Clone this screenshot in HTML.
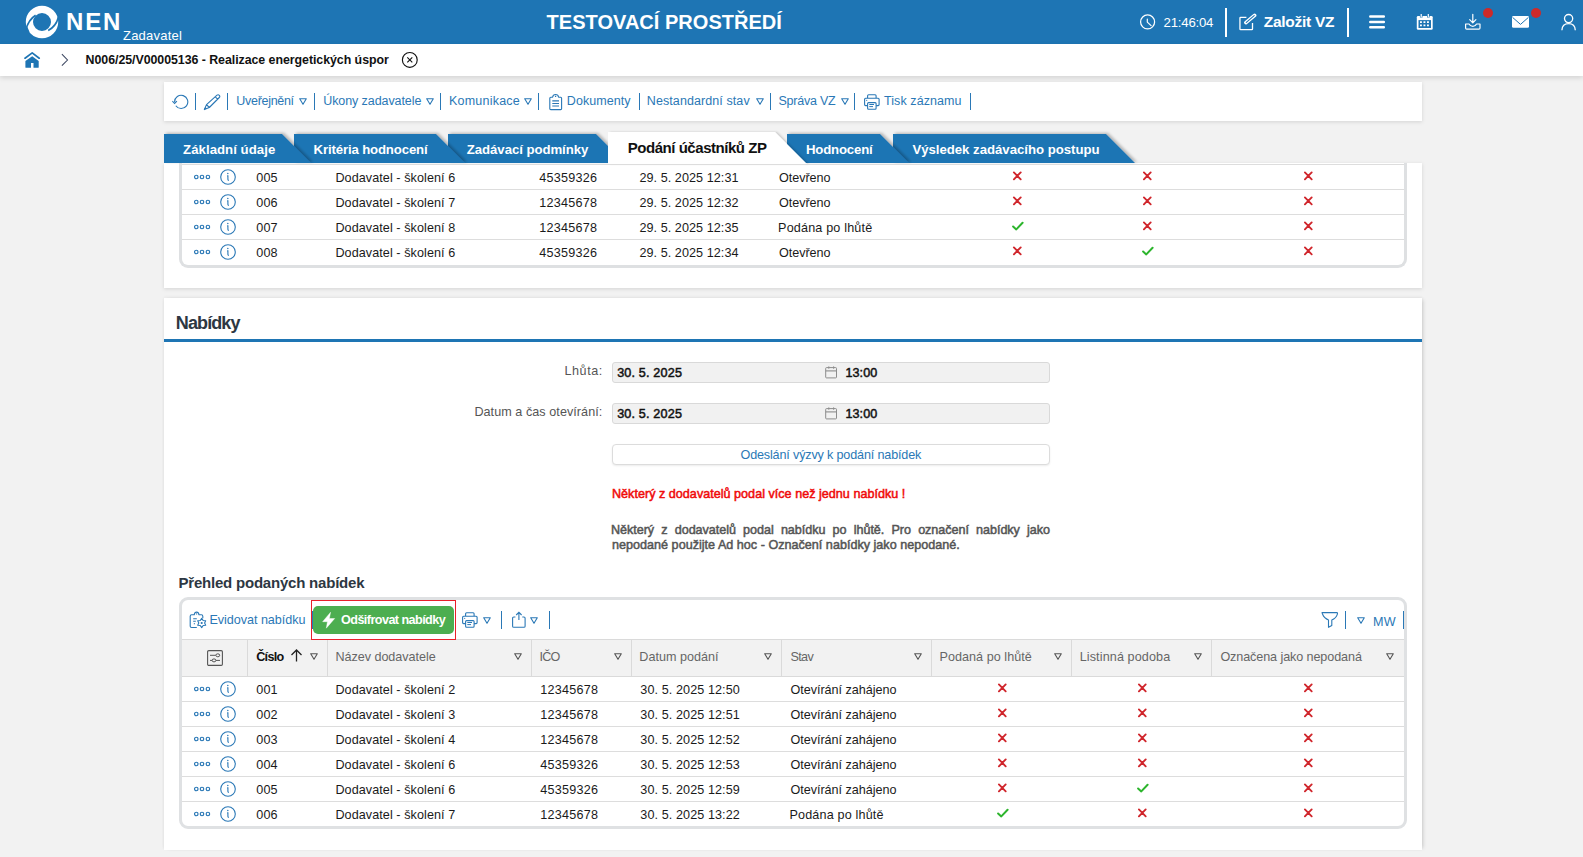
<!DOCTYPE html>
<html><head><meta charset="utf-8">
<style>
*{box-sizing:border-box}
html,body{margin:0;padding:0}
body{width:1583px;height:857px;overflow:hidden;background:#f2f2f2;font-family:"Liberation Sans",sans-serif;position:relative;color:#1a1a1a}
.a{position:absolute}
.t{position:absolute;white-space:nowrap;line-height:1}
.panel{position:absolute;background:#fff;box-shadow:0 1px 4px rgba(0,0,0,.13)}
</style></head>
<body>
<div class="a" style="left:0;top:0;width:1583px;height:44px;background:#1e75b4"></div>
<svg class="a" style="left:25px;top:5px" width="34" height="34" viewBox="0 0 34 34">
  <circle cx="17" cy="17" r="12.6" fill="none" stroke="#fff" stroke-width="7.2"/>
  <path d="M0.5 25.5 Q3.5 14.5 10.6 10.2" fill="none" stroke="#1e75b4" stroke-width="1.7"/>
  <path d="M1 27.5 L2.2 21.5 L4.5 27 Z" fill="#1e75b4"/>
  <path d="M33.6 11.8 Q31 21.5 23.2 25.6" fill="none" stroke="#1e75b4" stroke-width="1.7"/>
 </svg>
<div class="t" style="left:66.00px;top:10.00px;font-size:24px;font-weight:bold;color:#fff;letter-spacing:1.830px;">NEN</div>
<div class="t" style="left:123.00px;top:29.00px;font-size:13px;color:#fff;letter-spacing:0.225px;">Zadavatel</div>
<div class="t" style="left:546.60px;top:12.00px;font-size:20px;font-weight:bold;color:#fff;letter-spacing:0.023px;">TESTOVACÍ PROSTŘEDÍ</div>
<svg class="a" style="left:1139px;top:13px" width="18" height="18" viewBox="0 0 18 18"><circle cx="8.6" cy="8.9" r="7" fill="none" stroke="#fff" stroke-width="1.25"/><path d="M8.3 6V9.1L12.1 12.6" fill="none" stroke="#fff" stroke-width="1.2" stroke-linecap="round" stroke-linejoin="round"/></svg>
<div class="t" style="left:1163.60px;top:16.00px;font-size:13.2px;color:#fff;letter-spacing:-0.214px;">21:46:04</div>
<div class="a" style="left:1225px;top:8px;width:2px;height:29px;background:#fff"></div>
<svg class="a" style="left:1239px;top:13px" width="18" height="18" viewBox="0 0 18 18"><path d="M7.4 4.3H1.6Q0.95 4.3 0.95 4.9V16.1Q0.95 16.7 1.6 16.7H12.9Q13.5 16.7 13.5 16.1V10" fill="none" stroke="#fff" stroke-width="1.3"/><path d="M6.9 9.6L15.6 2.4" stroke="#fff" stroke-width="3.6" stroke-linecap="round"/><path d="M7.3 9.3L15.2 2.7" stroke="#1e75b4" stroke-width="1.1" stroke-linecap="round"/></svg>
<div class="t" style="left:1263.70px;top:14.00px;font-size:15.5px;font-weight:bold;color:#fff;letter-spacing:-0.270px;">Založit VZ</div>
<div class="a" style="left:1347px;top:8px;width:2px;height:29px;background:#fff"></div>
<svg class="a" style="left:1368px;top:14px" width="18" height="16" viewBox="0 0 18 16"><path d="M2.3 2.6H15.8M2.3 7.9H15.8M2.3 13.2H15.8" stroke="#fff" stroke-width="2.5" stroke-linecap="round"/></svg>
<svg class="a" style="left:1416px;top:13px" width="18" height="18" viewBox="0 0 18 18"><rect x="0.8" y="2.9" width="15.9" height="13.8" rx="1.3" fill="#fff"/><rect x="2.5" y="7.1" width="12.5" height="7.9" fill="#1e75b4"/><path d="M4 9.2H13.4M4 12.4H13.4" stroke="#fff" stroke-width="1.7" stroke-dasharray="1.9 1.6"/><path d="M5.2 0.6V4.6M12.3 0.6V4.6" stroke="#1e75b4" stroke-width="2.6"/><path d="M5.2 1V4.2M12.3 1V4.2" stroke="#fff" stroke-width="1.2"/></svg>
<svg class="a" style="left:1464px;top:13px" width="18" height="18" viewBox="0 0 18 18"><path d="M8.8 1.3V9.6M5.7 6.7L8.8 9.8L11.9 6.7" fill="none" stroke="#fff" stroke-width="1.2" stroke-linecap="round" stroke-linejoin="round"/><path d="M1.6 11V15Q1.6 16.1 2.7 16.1H14.9Q16 16.1 16 15V11H12.6Q11.2 13.4 8.8 13.4Q6.4 13.4 5 11Z" fill="none" stroke="#fff" stroke-width="1.2" stroke-linejoin="round"/></svg>
<div class="a" style="left:1483px;top:8px;width:10px;height:10px;border-radius:50%;background:#cd2a2a"></div>
<svg class="a" style="left:1512px;top:16px" width="17" height="12" viewBox="0 0 17 12"><rect x="0" y="0" width="17" height="11.8" rx="1.4" fill="#fff"/><path d="M0.6 1.4L8.5 8.4L16.4 1.4" fill="none" stroke="#1e75b4" stroke-width="1"/></svg>
<div class="a" style="left:1531px;top:8px;width:10px;height:10px;border-radius:50%;background:#cd2a2a"></div>
<svg class="a" style="left:1560px;top:13px" width="17" height="18" viewBox="0 0 17 18"><circle cx="8.6" cy="5.6" r="4.1" fill="none" stroke="#fff" stroke-width="1.3"/><path d="M1.9 17.2Q2.2 10.6 8.6 10.6Q15 10.6 15.3 17.2" fill="none" stroke="#fff" stroke-width="1.3"/></svg>
<div class="a" style="left:0;top:44px;width:1583px;height:32px;background:#fff;box-shadow:0 2px 5px rgba(0,0,0,.13)"></div>
<svg class="a" style="left:24px;top:52px" width="17" height="17" viewBox="0 0 17 17"><path d="M1 6.2L8.2 0.9L15.2 6.2" fill="none" stroke="#1e75b4" stroke-width="1.7" stroke-linecap="round" stroke-linejoin="round"/><path d="M1.4 9.1L8.2 4.2L14.7 9.1V15.2Q14.7 15.8 14 15.8H9.5V10.9H7V15.8H2.1Q1.4 15.8 1.4 15.2Z" fill="#1e75b4"/></svg>
<svg class="a" style="left:60px;top:53px" width="9" height="14" viewBox="0 0 9 14"><path d="M1.9 1.2L7.5 7L1.9 12.7" fill="none" stroke="#3b4660" stroke-width="1.05"/></svg>
<div class="t" style="left:85.60px;top:54.00px;font-size:12.4px;font-weight:bold;color:#111;letter-spacing:-0.054px;">N006/25/V00005136 - Realizace energetických úspor</div>
<svg class="a" style="left:401px;top:51px" width="18" height="18" viewBox="0 0 18 18"><circle cx="8.8" cy="8.9" r="7.4" fill="none" stroke="#111" stroke-width="1.15"/><path d="M6.3 6.4L11.3 11.4M11.3 6.4L6.3 11.4" stroke="#111" stroke-width="1.1"/></svg>
<div class="panel" style="left:164px;top:82px;width:1258px;height:39px"></div>
<svg class="a" style="left:172px;top:94px" width="17" height="16" viewBox="0 0 17 16"><path d="M2.6 7.9A6.6 6.6 0 1 1 3.8 11.7" fill="none" stroke="#2a78b6" stroke-width="1.1"/><path d="M0.3 7.1L2.6 9.4L4.9 7.1" fill="none" stroke="#2a78b6" stroke-width="1.1"/></svg>
<div class="a" style="left:195px;top:93px;width:1px;height:17px;background:#2a78b6"></div>
<svg class="a" style="left:203px;top:93px" width="18" height="18" viewBox="0 0 18 18"><path d="M14 2.2Q15.2 1.2 16.3 2.3Q17.3 3.4 16.3 4.5L6.3 14.5L1.3 16.6L3.5 11.6Z M12.3 3.9L14.6 6.2 M3.5 11.6L6.3 14.5" fill="none" stroke="#2a78b6" stroke-width="1.1" stroke-linejoin="round"/><path d="M1.3 16.6L2.2 13.8L4.1 15.7Z" fill="#2a78b6"/></svg>
<div class="a" style="left:227px;top:93px;width:1px;height:17px;background:#2a78b6"></div>
<div class="t" style="left:236.30px;top:95.00px;font-size:12.5px;color:#2a78b6;letter-spacing:-0.297px;">Uveřejnění</div>
<svg class="a" style="left:299px;top:98px" width="8" height="7" viewBox="0 0 8 7"><path d="M0.7 0.8H7.3L4 6.3Z" fill="none" stroke="#2a78b6" stroke-width="1.1" stroke-linejoin="round"/></svg>
<div class="a" style="left:314px;top:93px;width:1px;height:17px;background:#2a78b6"></div>
<div class="t" style="left:323.20px;top:95.00px;font-size:12.5px;color:#2a78b6;letter-spacing:-0.081px;">Úkony zadavatele</div>
<svg class="a" style="left:425.5px;top:98px" width="8" height="7" viewBox="0 0 8 7"><path d="M0.7 0.8H7.3L4 6.3Z" fill="none" stroke="#2a78b6" stroke-width="1.1" stroke-linejoin="round"/></svg>
<div class="a" style="left:440px;top:93px;width:1px;height:17px;background:#2a78b6"></div>
<div class="t" style="left:449.00px;top:95.00px;font-size:12.5px;color:#2a78b6;letter-spacing:0.218px;">Komunikace</div>
<svg class="a" style="left:524px;top:98px" width="8" height="7" viewBox="0 0 8 7"><path d="M0.7 0.8H7.3L4 6.3Z" fill="none" stroke="#2a78b6" stroke-width="1.1" stroke-linejoin="round"/></svg>
<div class="a" style="left:538px;top:93px;width:1px;height:17px;background:#2a78b6"></div>
<svg class="a" style="left:548px;top:93px" width="15" height="18" viewBox="0 0 15 18"><path d="M4.6 4.2H2.8Q1.8 4.2 1.8 5.2V15.7Q1.8 16.6 2.8 16.6H12.7Q13.6 16.6 13.6 15.7V5.2Q13.6 4.2 12.7 4.2H10.6Q10.2 1.6 7.6 1.5Q5 1.6 4.6 4.2Z" fill="none" stroke="#2a78b6" stroke-width="1.1" stroke-linejoin="round"/><circle cx="7.6" cy="3.4" r="0.7" fill="#2a78b6"/><path d="M4.3 7.9H11M4.3 10.5H11M4.3 13H11" stroke="#2a78b6" stroke-width="1.1"/></svg>
<div class="t" style="left:566.80px;top:95.00px;font-size:12.5px;color:#2a78b6;letter-spacing:0.054px;">Dokumenty</div>
<div class="a" style="left:639px;top:93px;width:1px;height:17px;background:#2a78b6"></div>
<div class="t" style="left:646.80px;top:95.00px;font-size:12.5px;color:#2a78b6;letter-spacing:0.088px;">Nestandardní stav</div>
<svg class="a" style="left:755.5px;top:98px" width="8" height="7" viewBox="0 0 8 7"><path d="M0.7 0.8H7.3L4 6.3Z" fill="none" stroke="#2a78b6" stroke-width="1.1" stroke-linejoin="round"/></svg>
<div class="a" style="left:769.5px;top:93px;width:1px;height:17px;background:#2a78b6"></div>
<div class="t" style="left:778.50px;top:95.00px;font-size:12.5px;color:#2a78b6;letter-spacing:-0.240px;">Správa VZ</div>
<svg class="a" style="left:840.5px;top:98px" width="8" height="7" viewBox="0 0 8 7"><path d="M0.7 0.8H7.3L4 6.3Z" fill="none" stroke="#2a78b6" stroke-width="1.1" stroke-linejoin="round"/></svg>
<div class="a" style="left:854px;top:93px;width:1px;height:17px;background:#2a78b6"></div>
<svg class="a" style="left:863px;top:93px" width="18" height="18" viewBox="0 0 18 18"><path d="M4.6 5V2.8Q4.6 1.8 5.6 1.8H12.1Q13.1 1.8 13.1 2.8V5" fill="none" stroke="#2a78b6" stroke-width="1.1"/><path d="M4.6 12.6H2.6Q1.6 12.6 1.6 11.6V6.2Q1.6 5.2 2.6 5.2H15.1Q16.1 5.2 16.1 6.2V11.6Q16.1 12.6 15.1 12.6H13.1" fill="none" stroke="#2a78b6" stroke-width="1.1"/><rect x="4.6" y="9.6" width="8.5" height="6.7" rx="1" fill="none" stroke="#2a78b6" stroke-width="1.1"/><path d="M6.3 11.5H11M6.3 13.6H10" stroke="#2a78b6" stroke-width="1"/><circle cx="3.7" cy="7.3" r="0.6" fill="#2a78b6"/></svg>
<div class="t" style="left:884.00px;top:95.00px;font-size:12.5px;color:#2a78b6;letter-spacing:0.083px;">Tisk záznamu</div>
<div class="a" style="left:970px;top:93px;width:1px;height:17px;background:#2a78b6"></div>
<div class="panel" style="left:164px;top:163px;width:1258px;height:125px"></div>
<svg class="a" style="left:0;top:120px" width="1583" height="50" viewBox="0 120 1583 50"><defs><filter id="sh" x="-10%" y="-30%" width="130%" height="160%"><feGaussianBlur in="SourceAlpha" stdDeviation="1.5"/><feOffset dx="2.2" dy="-1" result="o"/><feComponentTransfer><feFuncA type="linear" slope="0.26"/></feComponentTransfer><feMerge><feMergeNode/><feMergeNode in="SourceGraphic"/></feMerge></filter><filter id="sh2" x="-10%" y="-30%" width="130%" height="160%"><feGaussianBlur in="SourceAlpha" stdDeviation="1.3"/><feOffset dx="2" dy="0" result="o"/><feComponentTransfer><feFuncA type="linear" slope="0.18"/></feComponentTransfer><feMerge><feMergeNode/><feMergeNode in="SourceGraphic"/></feMerge></filter></defs><polygon points="893,134 1106,134 1135,163 893,163" fill="#1e75b4" filter="url(#sh)"/><polygon points="787,134 880,134 909,163 787,163" fill="#1e75b4" filter="url(#sh)"/><polygon points="448,134 596,134 625,163 448,163" fill="#1e75b4" filter="url(#sh)"/><polygon points="294,134 436,134 465,163 294,163" fill="#1e75b4" filter="url(#sh)"/><polygon points="164,134 282,134 311,163 164,163" fill="#1e75b4" filter="url(#sh)"/><polygon points="608,132 775,132 807,164 608,164" fill="#fff" filter="url(#sh2)"/></svg>
<div class="t" style="left:183.10px;top:143.00px;font-size:13.2px;font-weight:bold;color:#fff;letter-spacing:0.041px;">Základní údaje</div>
<div class="t" style="left:313.60px;top:143.00px;font-size:13.2px;font-weight:bold;color:#fff;letter-spacing:-0.144px;">Kritéria hodnocení</div>
<div class="t" style="left:466.80px;top:143.00px;font-size:13.2px;font-weight:bold;color:#fff;letter-spacing:-0.053px;">Zadávací podmínky</div>
<div class="t" style="left:806.00px;top:143.00px;font-size:13.2px;font-weight:bold;color:#fff;letter-spacing:-0.184px;">Hodnocení</div>
<div class="t" style="left:912.40px;top:143.00px;font-size:13.2px;font-weight:bold;color:#fff;letter-spacing:-0.018px;">Výsledek zadávacího postupu</div>
<div class="t" style="left:627.70px;top:140.00px;font-size:15px;font-weight:bold;color:#111;letter-spacing:-0.457px;">Podání účastníků ZP</div>
<div class="a" style="left:179px;top:163px;height:105px;border:3px solid #dee0e2;border-top:none;border-radius:0 0 9px 9px;width:1228px"></div>
<div class="a" style="left:182px;top:164px;width:1222px;height:1px;background:#dddddd"></div>
<svg class="a" style="left:194px;top:174px" width="17" height="6" viewBox="0 0 17 6"><circle cx="2.3" cy="3" r="1.75" fill="none" stroke="#2a78b6" stroke-width="1.2"/><circle cx="8" cy="3" r="1.75" fill="none" stroke="#2a78b6" stroke-width="1.2"/><circle cx="13.9" cy="3" r="1.75" fill="none" stroke="#2a78b6" stroke-width="1.2"/></svg>
<svg class="a" style="left:220px;top:169px" width="16" height="16" viewBox="0 0 16 16"><circle cx="8" cy="8" r="7.3" fill="none" stroke="#2a78b6" stroke-width="1.1"/><circle cx="7.8" cy="4.6" r="0.75" fill="#2a78b6"/><path d="M7.1 6.9H7.9V10.6Q7.9 11.4 8.9 11.4" fill="none" stroke="#2a78b6" stroke-width="1.1"/></svg>
<div class="t" style="left:256.30px;top:172.00px;font-size:12.6px;color:#1a1a1a;letter-spacing:0.096px;">005</div>
<div class="t" style="left:335.40px;top:172.00px;font-size:12.6px;color:#1a1a1a;letter-spacing:0.075px;">Dodavatel - školení 6</div>
<div class="t" style="left:539.30px;top:172.00px;font-size:12.6px;color:#1a1a1a;letter-spacing:0.239px;">45359326</div>
<div class="t" style="left:639.40px;top:172.00px;font-size:12.6px;color:#1a1a1a;letter-spacing:0.067px;">29. 5. 2025 12:31</div>
<div class="t" style="left:779.10px;top:172.00px;font-size:12.6px;color:#1a1a1a;letter-spacing:-0.071px;">Otevřeno</div>
<svg class="a" style="left:1012px;top:171px" width="11" height="10" viewBox="0 0 11 10"><path d="M1.9 1.4L8.7 8.3M8.7 1.4L1.9 8.3" stroke="#d0262c" stroke-width="1.9" stroke-linecap="round"/></svg>
<svg class="a" style="left:1142px;top:171px" width="11" height="10" viewBox="0 0 11 10"><path d="M1.9 1.4L8.7 8.3M8.7 1.4L1.9 8.3" stroke="#d0262c" stroke-width="1.9" stroke-linecap="round"/></svg>
<svg class="a" style="left:1303px;top:171px" width="11" height="10" viewBox="0 0 11 10"><path d="M1.9 1.4L8.7 8.3M8.7 1.4L1.9 8.3" stroke="#d0262c" stroke-width="1.9" stroke-linecap="round"/></svg>
<div class="a" style="left:182px;top:189px;width:1222px;height:1px;background:#dddddd"></div>
<svg class="a" style="left:194px;top:199px" width="17" height="6" viewBox="0 0 17 6"><circle cx="2.3" cy="3" r="1.75" fill="none" stroke="#2a78b6" stroke-width="1.2"/><circle cx="8" cy="3" r="1.75" fill="none" stroke="#2a78b6" stroke-width="1.2"/><circle cx="13.9" cy="3" r="1.75" fill="none" stroke="#2a78b6" stroke-width="1.2"/></svg>
<svg class="a" style="left:220px;top:194px" width="16" height="16" viewBox="0 0 16 16"><circle cx="8" cy="8" r="7.3" fill="none" stroke="#2a78b6" stroke-width="1.1"/><circle cx="7.8" cy="4.6" r="0.75" fill="#2a78b6"/><path d="M7.1 6.9H7.9V10.6Q7.9 11.4 8.9 11.4" fill="none" stroke="#2a78b6" stroke-width="1.1"/></svg>
<div class="t" style="left:256.30px;top:197.00px;font-size:12.6px;color:#1a1a1a;letter-spacing:0.134px;">006</div>
<div class="t" style="left:335.40px;top:197.00px;font-size:12.6px;color:#1a1a1a;letter-spacing:0.075px;">Dodavatel - školení 7</div>
<div class="t" style="left:539.30px;top:197.00px;font-size:12.6px;color:#1a1a1a;letter-spacing:0.239px;">12345678</div>
<div class="t" style="left:639.40px;top:197.00px;font-size:12.6px;color:#1a1a1a;letter-spacing:0.067px;">29. 5. 2025 12:32</div>
<div class="t" style="left:779.10px;top:197.00px;font-size:12.6px;color:#1a1a1a;letter-spacing:-0.071px;">Otevřeno</div>
<svg class="a" style="left:1012px;top:196px" width="11" height="10" viewBox="0 0 11 10"><path d="M1.9 1.4L8.7 8.3M8.7 1.4L1.9 8.3" stroke="#d0262c" stroke-width="1.9" stroke-linecap="round"/></svg>
<svg class="a" style="left:1142px;top:196px" width="11" height="10" viewBox="0 0 11 10"><path d="M1.9 1.4L8.7 8.3M8.7 1.4L1.9 8.3" stroke="#d0262c" stroke-width="1.9" stroke-linecap="round"/></svg>
<svg class="a" style="left:1303px;top:196px" width="11" height="10" viewBox="0 0 11 10"><path d="M1.9 1.4L8.7 8.3M8.7 1.4L1.9 8.3" stroke="#d0262c" stroke-width="1.9" stroke-linecap="round"/></svg>
<div class="a" style="left:182px;top:214px;width:1222px;height:1px;background:#dddddd"></div>
<svg class="a" style="left:194px;top:224px" width="17" height="6" viewBox="0 0 17 6"><circle cx="2.3" cy="3" r="1.75" fill="none" stroke="#2a78b6" stroke-width="1.2"/><circle cx="8" cy="3" r="1.75" fill="none" stroke="#2a78b6" stroke-width="1.2"/><circle cx="13.9" cy="3" r="1.75" fill="none" stroke="#2a78b6" stroke-width="1.2"/></svg>
<svg class="a" style="left:220px;top:219px" width="16" height="16" viewBox="0 0 16 16"><circle cx="8" cy="8" r="7.3" fill="none" stroke="#2a78b6" stroke-width="1.1"/><circle cx="7.8" cy="4.6" r="0.75" fill="#2a78b6"/><path d="M7.1 6.9H7.9V10.6Q7.9 11.4 8.9 11.4" fill="none" stroke="#2a78b6" stroke-width="1.1"/></svg>
<div class="t" style="left:256.30px;top:222.00px;font-size:12.6px;color:#1a1a1a;letter-spacing:0.134px;">007</div>
<div class="t" style="left:335.40px;top:222.00px;font-size:12.6px;color:#1a1a1a;letter-spacing:0.075px;">Dodavatel - školení 8</div>
<div class="t" style="left:539.30px;top:222.00px;font-size:12.6px;color:#1a1a1a;letter-spacing:0.239px;">12345678</div>
<div class="t" style="left:639.40px;top:222.00px;font-size:12.6px;color:#1a1a1a;letter-spacing:0.067px;">29. 5. 2025 12:35</div>
<div class="t" style="left:778.10px;top:222.00px;font-size:12.6px;color:#1a1a1a;letter-spacing:0.169px;">Podána po lhůtě</div>
<svg class="a" style="left:1011px;top:221px" width="13" height="11" viewBox="0 0 13 11"><path d="M2.1 5.5L5.3 8.4L11.6 1.8" fill="none" stroke="#2db52d" stroke-width="2" stroke-linecap="round" stroke-linejoin="round"/></svg>
<svg class="a" style="left:1142px;top:221px" width="11" height="10" viewBox="0 0 11 10"><path d="M1.9 1.4L8.7 8.3M8.7 1.4L1.9 8.3" stroke="#d0262c" stroke-width="1.9" stroke-linecap="round"/></svg>
<svg class="a" style="left:1303px;top:221px" width="11" height="10" viewBox="0 0 11 10"><path d="M1.9 1.4L8.7 8.3M8.7 1.4L1.9 8.3" stroke="#d0262c" stroke-width="1.9" stroke-linecap="round"/></svg>
<div class="a" style="left:182px;top:239px;width:1222px;height:1px;background:#dddddd"></div>
<svg class="a" style="left:194px;top:249px" width="17" height="6" viewBox="0 0 17 6"><circle cx="2.3" cy="3" r="1.75" fill="none" stroke="#2a78b6" stroke-width="1.2"/><circle cx="8" cy="3" r="1.75" fill="none" stroke="#2a78b6" stroke-width="1.2"/><circle cx="13.9" cy="3" r="1.75" fill="none" stroke="#2a78b6" stroke-width="1.2"/></svg>
<svg class="a" style="left:220px;top:244px" width="16" height="16" viewBox="0 0 16 16"><circle cx="8" cy="8" r="7.3" fill="none" stroke="#2a78b6" stroke-width="1.1"/><circle cx="7.8" cy="4.6" r="0.75" fill="#2a78b6"/><path d="M7.1 6.9H7.9V10.6Q7.9 11.4 8.9 11.4" fill="none" stroke="#2a78b6" stroke-width="1.1"/></svg>
<div class="t" style="left:256.30px;top:247.00px;font-size:12.6px;color:#1a1a1a;letter-spacing:0.134px;">008</div>
<div class="t" style="left:335.40px;top:247.00px;font-size:12.6px;color:#1a1a1a;letter-spacing:0.075px;">Dodavatel - školení 6</div>
<div class="t" style="left:539.30px;top:247.00px;font-size:12.6px;color:#1a1a1a;letter-spacing:0.239px;">45359326</div>
<div class="t" style="left:639.40px;top:247.00px;font-size:12.6px;color:#1a1a1a;letter-spacing:0.067px;">29. 5. 2025 12:34</div>
<div class="t" style="left:779.10px;top:247.00px;font-size:12.6px;color:#1a1a1a;letter-spacing:-0.071px;">Otevřeno</div>
<svg class="a" style="left:1012px;top:246px" width="11" height="10" viewBox="0 0 11 10"><path d="M1.9 1.4L8.7 8.3M8.7 1.4L1.9 8.3" stroke="#d0262c" stroke-width="1.9" stroke-linecap="round"/></svg>
<svg class="a" style="left:1141px;top:246px" width="13" height="11" viewBox="0 0 13 11"><path d="M2.1 5.5L5.3 8.4L11.6 1.8" fill="none" stroke="#2db52d" stroke-width="2" stroke-linecap="round" stroke-linejoin="round"/></svg>
<svg class="a" style="left:1303px;top:246px" width="11" height="10" viewBox="0 0 11 10"><path d="M1.9 1.4L8.7 8.3M8.7 1.4L1.9 8.3" stroke="#d0262c" stroke-width="1.9" stroke-linecap="round"/></svg>
<div class="panel" style="left:164px;top:298px;width:1258px;height:552px;box-shadow:3px 0 4px -2px rgba(0,0,0,.16),-2px 0 3px -2px rgba(0,0,0,.07),0 -1px 3px rgba(0,0,0,.05)"></div>
<div class="t" style="left:175.80px;top:314.00px;font-size:18px;font-weight:bold;color:#2d3742;letter-spacing:-0.885px;">Nabídky</div>
<div class="a" style="left:164px;top:339px;width:1258px;height:3px;background:#1e75b4"></div>
<div class="t" style="left:564.50px;top:365.00px;font-size:12.6px;color:#555;letter-spacing:0.557px;">Lhůta:</div>
<div class="a" style="left:612px;top:362px;width:438px;height:21px;background:#f1f1f1;border:1px solid #d9d9d9;border-radius:3px"></div>
<div class="t" style="left:617.20px;top:367.00px;font-size:12.6px;color:#111;letter-spacing:0.168px;-webkit-text-stroke:0.5px #111;">30. 5. 2025</div>
<svg class="a" style="left:825px;top:366px" width="13" height="13" viewBox="0 0 13 13"><rect x="0.7" y="1.6" width="10.8" height="10.3" rx="0.8" fill="none" stroke="#8c8c8c" stroke-width="1"/><path d="M0.7 4.9H11.5" stroke="#8c8c8c" stroke-width="1.1"/><path d="M3.8 0.3V2.8M8.6 0.3V2.8" stroke="#8c8c8c" stroke-width="0.9"/></svg>
<div class="t" style="left:845.50px;top:367.00px;font-size:12.6px;color:#111;letter-spacing:0.047px;-webkit-text-stroke:0.5px #111;">13:00</div>
<div class="t" style="left:474.40px;top:406.00px;font-size:12.6px;color:#555;letter-spacing:0.057px;">Datum a čas otevírání:</div>
<div class="a" style="left:612px;top:403px;width:438px;height:21px;background:#f1f1f1;border:1px solid #d9d9d9;border-radius:3px"></div>
<div class="t" style="left:617.20px;top:408.00px;font-size:12.6px;color:#111;letter-spacing:0.168px;-webkit-text-stroke:0.5px #111;">30. 5. 2025</div>
<svg class="a" style="left:825px;top:407px" width="13" height="13" viewBox="0 0 13 13"><rect x="0.7" y="1.6" width="10.8" height="10.3" rx="0.8" fill="none" stroke="#8c8c8c" stroke-width="1"/><path d="M0.7 4.9H11.5" stroke="#8c8c8c" stroke-width="1.1"/><path d="M3.8 0.3V2.8M8.6 0.3V2.8" stroke="#8c8c8c" stroke-width="0.9"/></svg>
<div class="t" style="left:845.50px;top:408.00px;font-size:12.6px;color:#111;letter-spacing:0.047px;-webkit-text-stroke:0.5px #111;">13:00</div>
<div class="a" style="left:612px;top:444px;width:438px;height:21px;background:#fff;border:1px solid #dcdcdc;border-radius:4px;box-shadow:0 1px 2px rgba(0,0,0,.08)"></div>
<div class="t" style="left:740.50px;top:449.00px;font-size:12.6px;color:#2a78b6;letter-spacing:-0.157px;">Odeslání výzvy k podání nabídek</div>
<div class="t" style="left:612.00px;top:488.00px;font-size:12.6px;color:#f00a0a;letter-spacing:0.013px;-webkit-text-stroke:0.5px #f00a0a;">Některý z dodavatelů podal více než jednu nabídku !</div>
<div class="t" style="left:611.00px;top:524.00px;font-size:12.6px;color:#555;letter-spacing:-0.05px;width:439px;text-align:justify;text-align-last:justify;-webkit-text-stroke:0.5px #555;">Některý z dodavatelů podal nabídku po lhůtě. Pro označení nabídky jako</div>
<div class="t" style="left:612.00px;top:539.00px;font-size:12.6px;color:#555;letter-spacing:0.009px;-webkit-text-stroke:0.5px #555;">nepodané použijte Ad hoc - Označení nabídky jako nepodané.</div>
<div class="t" style="left:178.50px;top:575.00px;font-size:15px;font-weight:bold;color:#2d3742;letter-spacing:-0.210px;">Přehled podaných nabídek</div>
<div class="a" style="left:179px;top:597px;width:1228px;height:232px;border:3px solid #dfe1e3;border-radius:9px"></div>
<svg class="a" style="left:189px;top:611px" width="18" height="18" viewBox="0 0 18 18"><path d="M7.8 16.5H2.6Q1.2 16.5 1.2 15.3V5.2Q1.2 3.8 2.6 3.8H5.2Q5.6 1.1 7.6 1.1Q9.6 1.1 10 3.8H12.4Q13.8 3.8 13.8 5.2V7.2" fill="none" stroke="#2a78b6" stroke-width="1.1" stroke-linejoin="round"/><circle cx="7.6" cy="2.9" r="0.6" fill="#2a78b6"/><path d="M4.2 7.7H7.8M4.2 10.3H6.8M4.8 12.8H6" stroke="#2a78b6" stroke-width="1.1"/><polygon points="12.70,7.40 14.15,9.49 16.68,9.70 15.60,12.00 16.68,14.30 14.15,14.51 12.70,16.60 11.25,14.51 8.72,14.30 9.80,12.00 8.72,9.70 11.25,9.49" fill="#fff" stroke="#2a78b6" stroke-width="1.1" stroke-linejoin="round"/><circle cx="12.7" cy="12" r="1.1" fill="#2a78b6"/></svg>
<div class="t" style="left:209.40px;top:614.00px;font-size:12.6px;color:#2a78b6;letter-spacing:-0.034px;">Evidovat nabídku</div>
<div class="a" style="left:312px;top:611px;width:1px;height:18px;background:#2a78b6"></div>
<div class="a" style="left:313px;top:606px;width:141px;height:28px;background:#4cae50;border-radius:5px"></div>
<svg class="a" style="left:322px;top:612px" width="14" height="17" viewBox="0 0 14 17"><path d="M8.6 0.2L0.6 9.7H5.4L4.3 16.2L12.7 6.5H7.4Z" fill="#fff" stroke="#fff" stroke-width="0.4" stroke-linejoin="round"/></svg>
<div class="t" style="left:341.00px;top:614.00px;font-size:12.6px;font-weight:bold;color:#fff;letter-spacing:-0.551px;">Odšifrovat nabídky</div>
<svg class="a" style="left:461px;top:611px" width="18" height="18" viewBox="0 0 18 18"><path d="M4.6 5V2.8Q4.6 1.8 5.6 1.8H12.1Q13.1 1.8 13.1 2.8V5" fill="none" stroke="#2a78b6" stroke-width="1.1"/><path d="M4.6 12.6H2.6Q1.6 12.6 1.6 11.6V6.2Q1.6 5.2 2.6 5.2H15.1Q16.1 5.2 16.1 6.2V11.6Q16.1 12.6 15.1 12.6H13.1" fill="none" stroke="#2a78b6" stroke-width="1.1"/><rect x="4.6" y="9.6" width="8.5" height="6.7" rx="1" fill="none" stroke="#2a78b6" stroke-width="1.1"/><path d="M6.3 11.5H11M6.3 13.6H10" stroke="#2a78b6" stroke-width="1"/><circle cx="3.7" cy="7.3" r="0.6" fill="#2a78b6"/></svg>
<svg class="a" style="left:483px;top:617px" width="8" height="7" viewBox="0 0 8 7"><path d="M0.7 0.8H7.3L4 6.3Z" fill="none" stroke="#2a78b6" stroke-width="1.1" stroke-linejoin="round"/></svg>
<div class="a" style="left:501px;top:611px;width:1px;height:18px;background:#2a78b6"></div>
<svg class="a" style="left:511px;top:610px" width="16" height="18" viewBox="0 0 16 18"><path d="M4.4 7H2.8Q1.6 7 1.6 8.2V16.2Q1.6 17.3 2.8 17.3H12.9Q14.1 17.3 14.1 16.2V8.2Q14.1 7 12.9 7H11.3" fill="none" stroke="#2a78b6" stroke-width="1.1"/><path d="M7.9 10V2.4M5.2 5L7.9 2.3L10.6 5" fill="none" stroke="#2a78b6" stroke-width="1.1"/></svg>
<svg class="a" style="left:530px;top:617px" width="8" height="7" viewBox="0 0 8 7"><path d="M0.7 0.8H7.3L4 6.3Z" fill="none" stroke="#2a78b6" stroke-width="1.1" stroke-linejoin="round"/></svg>
<div class="a" style="left:549px;top:611px;width:1px;height:18px;background:#2a78b6"></div>
<svg class="a" style="left:1320px;top:611px" width="19" height="18" viewBox="0 0 19 18"><path d="M2 1.6H16.9Q17.8 1.8 17.3 3.3Q16 7.2 11.8 8.9V14.4L8.5 16.3V8.9Q4.1 7.2 2.6 3.3Q1.9 1.8 2 1.6Z" fill="none" stroke="#2a78b6" stroke-width="1.1" stroke-linejoin="round"/></svg>
<div class="a" style="left:1345px;top:611px;width:1px;height:18px;background:#2a78b6"></div>
<svg class="a" style="left:1357px;top:617px" width="8" height="7" viewBox="0 0 8 7"><path d="M0.7 0.8H7.3L4 6.3Z" fill="none" stroke="#2a78b6" stroke-width="1.1" stroke-linejoin="round"/></svg>
<div class="t" style="left:1373.00px;top:616.00px;font-size:12.6px;color:#2a78b6;letter-spacing:0.209px;">MW</div>
<div class="a" style="left:1403px;top:611px;width:1px;height:18px;background:#2a78b6"></div>
<div class="a" style="left:182px;top:639px;width:1222px;height:38px;background:#f2f2f2;border-top:1px solid #dadada;border-bottom:1px solid #dadada"></div>
<svg class="a" style="left:207px;top:650px" width="17" height="17" viewBox="0 0 17 17"><rect x="0.6" y="0.6" width="14.8" height="14.8" rx="1.2" fill="none" stroke="#555" stroke-width="1.1"/><path d="M3 5.3H13M3 10.4H13" stroke="#555" stroke-width="1"/><ellipse cx="10.8" cy="5.3" rx="1.9" ry="1.5" fill="#f2f2f2" stroke="#555" stroke-width="1"/><ellipse cx="7" cy="10.4" rx="1.9" ry="1.5" fill="#f2f2f2" stroke="#555" stroke-width="1"/></svg>
<div class="a" style="left:311px;top:600px;width:145px;height:40px;border:1px solid #e8202a"></div>
<div class="a" style="left:247px;top:640px;width:1px;height:36px;background:#dadada"></div>
<div class="a" style="left:327px;top:640px;width:1px;height:36px;background:#dadada"></div>
<div class="a" style="left:531px;top:640px;width:1px;height:36px;background:#dadada"></div>
<div class="a" style="left:631px;top:640px;width:1px;height:36px;background:#dadada"></div>
<div class="a" style="left:781px;top:640px;width:1px;height:36px;background:#dadada"></div>
<div class="a" style="left:931px;top:640px;width:1px;height:36px;background:#dadada"></div>
<div class="a" style="left:1071px;top:640px;width:1px;height:36px;background:#dadada"></div>
<div class="a" style="left:1211px;top:640px;width:1px;height:36px;background:#dadada"></div>
<div class="t" style="left:256.20px;top:651.00px;font-size:12.6px;font-weight:bold;color:#111;letter-spacing:-0.674px;">Číslo</div>
<svg class="a" style="left:290px;top:649px" width="13" height="13" viewBox="0 0 13 13"><path d="M6.5 12.5V1M1.5 6L6.5 1L11.5 6" fill="none" stroke="#222" stroke-width="1.3"/></svg>
<svg class="a" style="left:310px;top:653px" width="8" height="7" viewBox="0 0 8 7"><path d="M0.7 0.8H7.3L4 6.3Z" fill="none" stroke="#555" stroke-width="1.1" stroke-linejoin="round"/></svg>
<div class="t" style="left:335.40px;top:651.00px;font-size:12.6px;color:#666;letter-spacing:-0.028px;">Název dodavatele</div>
<svg class="a" style="left:514px;top:653px" width="8" height="7" viewBox="0 0 8 7"><path d="M0.7 0.8H7.3L4 6.3Z" fill="none" stroke="#555" stroke-width="1.1" stroke-linejoin="round"/></svg>
<div class="t" style="left:539.50px;top:651.00px;font-size:12.6px;color:#666;letter-spacing:-0.756px;">IČO</div>
<svg class="a" style="left:614px;top:653px" width="8" height="7" viewBox="0 0 8 7"><path d="M0.7 0.8H7.3L4 6.3Z" fill="none" stroke="#555" stroke-width="1.1" stroke-linejoin="round"/></svg>
<div class="t" style="left:639.30px;top:651.00px;font-size:12.6px;color:#666;letter-spacing:0.008px;">Datum podání</div>
<svg class="a" style="left:764px;top:653px" width="8" height="7" viewBox="0 0 8 7"><path d="M0.7 0.8H7.3L4 6.3Z" fill="none" stroke="#555" stroke-width="1.1" stroke-linejoin="round"/></svg>
<div class="t" style="left:790.40px;top:651.00px;font-size:12.6px;color:#666;letter-spacing:-0.604px;">Stav</div>
<svg class="a" style="left:914px;top:653px" width="8" height="7" viewBox="0 0 8 7"><path d="M0.7 0.8H7.3L4 6.3Z" fill="none" stroke="#555" stroke-width="1.1" stroke-linejoin="round"/></svg>
<div class="t" style="left:939.50px;top:651.00px;font-size:12.6px;color:#666;letter-spacing:0.041px;">Podaná po lhůtě</div>
<svg class="a" style="left:1054px;top:653px" width="8" height="7" viewBox="0 0 8 7"><path d="M0.7 0.8H7.3L4 6.3Z" fill="none" stroke="#555" stroke-width="1.1" stroke-linejoin="round"/></svg>
<div class="t" style="left:1079.70px;top:651.00px;font-size:12.6px;color:#666;letter-spacing:0.112px;">Listinná podoba</div>
<svg class="a" style="left:1194px;top:653px" width="8" height="7" viewBox="0 0 8 7"><path d="M0.7 0.8H7.3L4 6.3Z" fill="none" stroke="#555" stroke-width="1.1" stroke-linejoin="round"/></svg>
<div class="t" style="left:1220.40px;top:651.00px;font-size:12.6px;color:#666;letter-spacing:-0.097px;">Označena jako nepodaná</div>
<svg class="a" style="left:1386px;top:653px" width="8" height="7" viewBox="0 0 8 7"><path d="M0.7 0.8H7.3L4 6.3Z" fill="none" stroke="#555" stroke-width="1.1" stroke-linejoin="round"/></svg>
<svg class="a" style="left:194px;top:686px" width="17" height="6" viewBox="0 0 17 6"><circle cx="2.3" cy="3" r="1.75" fill="none" stroke="#2a78b6" stroke-width="1.2"/><circle cx="8" cy="3" r="1.75" fill="none" stroke="#2a78b6" stroke-width="1.2"/><circle cx="13.9" cy="3" r="1.75" fill="none" stroke="#2a78b6" stroke-width="1.2"/></svg>
<svg class="a" style="left:220px;top:681px" width="16" height="16" viewBox="0 0 16 16"><circle cx="8" cy="8" r="7.3" fill="none" stroke="#2a78b6" stroke-width="1.1"/><circle cx="7.8" cy="4.6" r="0.75" fill="#2a78b6"/><path d="M7.1 6.9H7.9V10.6Q7.9 11.4 8.9 11.4" fill="none" stroke="#2a78b6" stroke-width="1.1"/></svg>
<div class="t" style="left:256.30px;top:684.00px;font-size:12.6px;color:#1a1a1a;letter-spacing:0.134px;">001</div>
<div class="t" style="left:335.40px;top:684.00px;font-size:12.6px;color:#1a1a1a;letter-spacing:0.075px;">Dodavatel - školení 2</div>
<div class="t" style="left:540.30px;top:684.00px;font-size:12.6px;color:#1a1a1a;letter-spacing:0.239px;">12345678</div>
<div class="t" style="left:640.30px;top:684.00px;font-size:12.6px;color:#1a1a1a;letter-spacing:0.092px;">30. 5. 2025 12:50</div>
<div class="t" style="left:790.40px;top:684.00px;font-size:12.6px;color:#1a1a1a;letter-spacing:-0.018px;">Otevírání zahájeno</div>
<svg class="a" style="left:997px;top:683px" width="11" height="10" viewBox="0 0 11 10"><path d="M1.9 1.4L8.7 8.3M8.7 1.4L1.9 8.3" stroke="#d0262c" stroke-width="1.9" stroke-linecap="round"/></svg>
<svg class="a" style="left:1137px;top:683px" width="11" height="10" viewBox="0 0 11 10"><path d="M1.9 1.4L8.7 8.3M8.7 1.4L1.9 8.3" stroke="#d0262c" stroke-width="1.9" stroke-linecap="round"/></svg>
<svg class="a" style="left:1303px;top:683px" width="11" height="10" viewBox="0 0 11 10"><path d="M1.9 1.4L8.7 8.3M8.7 1.4L1.9 8.3" stroke="#d0262c" stroke-width="1.9" stroke-linecap="round"/></svg>
<div class="a" style="left:182px;top:701px;width:1222px;height:1px;background:#dddddd"></div>
<svg class="a" style="left:194px;top:711px" width="17" height="6" viewBox="0 0 17 6"><circle cx="2.3" cy="3" r="1.75" fill="none" stroke="#2a78b6" stroke-width="1.2"/><circle cx="8" cy="3" r="1.75" fill="none" stroke="#2a78b6" stroke-width="1.2"/><circle cx="13.9" cy="3" r="1.75" fill="none" stroke="#2a78b6" stroke-width="1.2"/></svg>
<svg class="a" style="left:220px;top:706px" width="16" height="16" viewBox="0 0 16 16"><circle cx="8" cy="8" r="7.3" fill="none" stroke="#2a78b6" stroke-width="1.1"/><circle cx="7.8" cy="4.6" r="0.75" fill="#2a78b6"/><path d="M7.1 6.9H7.9V10.6Q7.9 11.4 8.9 11.4" fill="none" stroke="#2a78b6" stroke-width="1.1"/></svg>
<div class="t" style="left:256.30px;top:709.00px;font-size:12.6px;color:#1a1a1a;letter-spacing:0.134px;">002</div>
<div class="t" style="left:335.40px;top:709.00px;font-size:12.6px;color:#1a1a1a;letter-spacing:0.075px;">Dodavatel - školení 3</div>
<div class="t" style="left:540.30px;top:709.00px;font-size:12.6px;color:#1a1a1a;letter-spacing:0.239px;">12345678</div>
<div class="t" style="left:640.30px;top:709.00px;font-size:12.6px;color:#1a1a1a;letter-spacing:0.092px;">30. 5. 2025 12:51</div>
<div class="t" style="left:790.40px;top:709.00px;font-size:12.6px;color:#1a1a1a;letter-spacing:-0.018px;">Otevírání zahájeno</div>
<svg class="a" style="left:997px;top:708px" width="11" height="10" viewBox="0 0 11 10"><path d="M1.9 1.4L8.7 8.3M8.7 1.4L1.9 8.3" stroke="#d0262c" stroke-width="1.9" stroke-linecap="round"/></svg>
<svg class="a" style="left:1137px;top:708px" width="11" height="10" viewBox="0 0 11 10"><path d="M1.9 1.4L8.7 8.3M8.7 1.4L1.9 8.3" stroke="#d0262c" stroke-width="1.9" stroke-linecap="round"/></svg>
<svg class="a" style="left:1303px;top:708px" width="11" height="10" viewBox="0 0 11 10"><path d="M1.9 1.4L8.7 8.3M8.7 1.4L1.9 8.3" stroke="#d0262c" stroke-width="1.9" stroke-linecap="round"/></svg>
<div class="a" style="left:182px;top:726px;width:1222px;height:1px;background:#dddddd"></div>
<svg class="a" style="left:194px;top:736px" width="17" height="6" viewBox="0 0 17 6"><circle cx="2.3" cy="3" r="1.75" fill="none" stroke="#2a78b6" stroke-width="1.2"/><circle cx="8" cy="3" r="1.75" fill="none" stroke="#2a78b6" stroke-width="1.2"/><circle cx="13.9" cy="3" r="1.75" fill="none" stroke="#2a78b6" stroke-width="1.2"/></svg>
<svg class="a" style="left:220px;top:731px" width="16" height="16" viewBox="0 0 16 16"><circle cx="8" cy="8" r="7.3" fill="none" stroke="#2a78b6" stroke-width="1.1"/><circle cx="7.8" cy="4.6" r="0.75" fill="#2a78b6"/><path d="M7.1 6.9H7.9V10.6Q7.9 11.4 8.9 11.4" fill="none" stroke="#2a78b6" stroke-width="1.1"/></svg>
<div class="t" style="left:256.30px;top:734.00px;font-size:12.6px;color:#1a1a1a;letter-spacing:0.134px;">003</div>
<div class="t" style="left:335.40px;top:734.00px;font-size:12.6px;color:#1a1a1a;letter-spacing:0.075px;">Dodavatel - školení 4</div>
<div class="t" style="left:540.30px;top:734.00px;font-size:12.6px;color:#1a1a1a;letter-spacing:0.239px;">12345678</div>
<div class="t" style="left:640.30px;top:734.00px;font-size:12.6px;color:#1a1a1a;letter-spacing:0.092px;">30. 5. 2025 12:52</div>
<div class="t" style="left:790.40px;top:734.00px;font-size:12.6px;color:#1a1a1a;letter-spacing:-0.018px;">Otevírání zahájeno</div>
<svg class="a" style="left:997px;top:733px" width="11" height="10" viewBox="0 0 11 10"><path d="M1.9 1.4L8.7 8.3M8.7 1.4L1.9 8.3" stroke="#d0262c" stroke-width="1.9" stroke-linecap="round"/></svg>
<svg class="a" style="left:1137px;top:733px" width="11" height="10" viewBox="0 0 11 10"><path d="M1.9 1.4L8.7 8.3M8.7 1.4L1.9 8.3" stroke="#d0262c" stroke-width="1.9" stroke-linecap="round"/></svg>
<svg class="a" style="left:1303px;top:733px" width="11" height="10" viewBox="0 0 11 10"><path d="M1.9 1.4L8.7 8.3M8.7 1.4L1.9 8.3" stroke="#d0262c" stroke-width="1.9" stroke-linecap="round"/></svg>
<div class="a" style="left:182px;top:751px;width:1222px;height:1px;background:#dddddd"></div>
<svg class="a" style="left:194px;top:761px" width="17" height="6" viewBox="0 0 17 6"><circle cx="2.3" cy="3" r="1.75" fill="none" stroke="#2a78b6" stroke-width="1.2"/><circle cx="8" cy="3" r="1.75" fill="none" stroke="#2a78b6" stroke-width="1.2"/><circle cx="13.9" cy="3" r="1.75" fill="none" stroke="#2a78b6" stroke-width="1.2"/></svg>
<svg class="a" style="left:220px;top:756px" width="16" height="16" viewBox="0 0 16 16"><circle cx="8" cy="8" r="7.3" fill="none" stroke="#2a78b6" stroke-width="1.1"/><circle cx="7.8" cy="4.6" r="0.75" fill="#2a78b6"/><path d="M7.1 6.9H7.9V10.6Q7.9 11.4 8.9 11.4" fill="none" stroke="#2a78b6" stroke-width="1.1"/></svg>
<div class="t" style="left:256.30px;top:759.00px;font-size:12.6px;color:#1a1a1a;letter-spacing:0.134px;">004</div>
<div class="t" style="left:335.40px;top:759.00px;font-size:12.6px;color:#1a1a1a;letter-spacing:0.075px;">Dodavatel - školení 6</div>
<div class="t" style="left:540.30px;top:759.00px;font-size:12.6px;color:#1a1a1a;letter-spacing:0.239px;">45359326</div>
<div class="t" style="left:640.30px;top:759.00px;font-size:12.6px;color:#1a1a1a;letter-spacing:0.092px;">30. 5. 2025 12:53</div>
<div class="t" style="left:790.40px;top:759.00px;font-size:12.6px;color:#1a1a1a;letter-spacing:-0.018px;">Otevírání zahájeno</div>
<svg class="a" style="left:997px;top:758px" width="11" height="10" viewBox="0 0 11 10"><path d="M1.9 1.4L8.7 8.3M8.7 1.4L1.9 8.3" stroke="#d0262c" stroke-width="1.9" stroke-linecap="round"/></svg>
<svg class="a" style="left:1137px;top:758px" width="11" height="10" viewBox="0 0 11 10"><path d="M1.9 1.4L8.7 8.3M8.7 1.4L1.9 8.3" stroke="#d0262c" stroke-width="1.9" stroke-linecap="round"/></svg>
<svg class="a" style="left:1303px;top:758px" width="11" height="10" viewBox="0 0 11 10"><path d="M1.9 1.4L8.7 8.3M8.7 1.4L1.9 8.3" stroke="#d0262c" stroke-width="1.9" stroke-linecap="round"/></svg>
<div class="a" style="left:182px;top:776px;width:1222px;height:1px;background:#dddddd"></div>
<svg class="a" style="left:194px;top:786px" width="17" height="6" viewBox="0 0 17 6"><circle cx="2.3" cy="3" r="1.75" fill="none" stroke="#2a78b6" stroke-width="1.2"/><circle cx="8" cy="3" r="1.75" fill="none" stroke="#2a78b6" stroke-width="1.2"/><circle cx="13.9" cy="3" r="1.75" fill="none" stroke="#2a78b6" stroke-width="1.2"/></svg>
<svg class="a" style="left:220px;top:781px" width="16" height="16" viewBox="0 0 16 16"><circle cx="8" cy="8" r="7.3" fill="none" stroke="#2a78b6" stroke-width="1.1"/><circle cx="7.8" cy="4.6" r="0.75" fill="#2a78b6"/><path d="M7.1 6.9H7.9V10.6Q7.9 11.4 8.9 11.4" fill="none" stroke="#2a78b6" stroke-width="1.1"/></svg>
<div class="t" style="left:256.30px;top:784.00px;font-size:12.6px;color:#1a1a1a;letter-spacing:0.096px;">005</div>
<div class="t" style="left:335.40px;top:784.00px;font-size:12.6px;color:#1a1a1a;letter-spacing:0.075px;">Dodavatel - školení 6</div>
<div class="t" style="left:540.30px;top:784.00px;font-size:12.6px;color:#1a1a1a;letter-spacing:0.239px;">45359326</div>
<div class="t" style="left:640.30px;top:784.00px;font-size:12.6px;color:#1a1a1a;letter-spacing:0.092px;">30. 5. 2025 12:59</div>
<div class="t" style="left:790.40px;top:784.00px;font-size:12.6px;color:#1a1a1a;letter-spacing:-0.018px;">Otevírání zahájeno</div>
<svg class="a" style="left:997px;top:783px" width="11" height="10" viewBox="0 0 11 10"><path d="M1.9 1.4L8.7 8.3M8.7 1.4L1.9 8.3" stroke="#d0262c" stroke-width="1.9" stroke-linecap="round"/></svg>
<svg class="a" style="left:1136px;top:783px" width="13" height="11" viewBox="0 0 13 11"><path d="M2.1 5.5L5.3 8.4L11.6 1.8" fill="none" stroke="#2db52d" stroke-width="2" stroke-linecap="round" stroke-linejoin="round"/></svg>
<svg class="a" style="left:1303px;top:783px" width="11" height="10" viewBox="0 0 11 10"><path d="M1.9 1.4L8.7 8.3M8.7 1.4L1.9 8.3" stroke="#d0262c" stroke-width="1.9" stroke-linecap="round"/></svg>
<div class="a" style="left:182px;top:801px;width:1222px;height:1px;background:#dddddd"></div>
<svg class="a" style="left:194px;top:811px" width="17" height="6" viewBox="0 0 17 6"><circle cx="2.3" cy="3" r="1.75" fill="none" stroke="#2a78b6" stroke-width="1.2"/><circle cx="8" cy="3" r="1.75" fill="none" stroke="#2a78b6" stroke-width="1.2"/><circle cx="13.9" cy="3" r="1.75" fill="none" stroke="#2a78b6" stroke-width="1.2"/></svg>
<svg class="a" style="left:220px;top:806px" width="16" height="16" viewBox="0 0 16 16"><circle cx="8" cy="8" r="7.3" fill="none" stroke="#2a78b6" stroke-width="1.1"/><circle cx="7.8" cy="4.6" r="0.75" fill="#2a78b6"/><path d="M7.1 6.9H7.9V10.6Q7.9 11.4 8.9 11.4" fill="none" stroke="#2a78b6" stroke-width="1.1"/></svg>
<div class="t" style="left:256.30px;top:809.00px;font-size:12.6px;color:#1a1a1a;letter-spacing:0.134px;">006</div>
<div class="t" style="left:335.40px;top:809.00px;font-size:12.6px;color:#1a1a1a;letter-spacing:0.075px;">Dodavatel - školení 7</div>
<div class="t" style="left:540.30px;top:809.00px;font-size:12.6px;color:#1a1a1a;letter-spacing:0.239px;">12345678</div>
<div class="t" style="left:640.30px;top:809.00px;font-size:12.6px;color:#1a1a1a;letter-spacing:0.092px;">30. 5. 2025 13:22</div>
<div class="t" style="left:789.40px;top:809.00px;font-size:12.6px;color:#1a1a1a;letter-spacing:0.169px;">Podána po lhůtě</div>
<svg class="a" style="left:996px;top:808px" width="13" height="11" viewBox="0 0 13 11"><path d="M2.1 5.5L5.3 8.4L11.6 1.8" fill="none" stroke="#2db52d" stroke-width="2" stroke-linecap="round" stroke-linejoin="round"/></svg>
<svg class="a" style="left:1137px;top:808px" width="11" height="10" viewBox="0 0 11 10"><path d="M1.9 1.4L8.7 8.3M8.7 1.4L1.9 8.3" stroke="#d0262c" stroke-width="1.9" stroke-linecap="round"/></svg>
<svg class="a" style="left:1303px;top:808px" width="11" height="10" viewBox="0 0 11 10"><path d="M1.9 1.4L8.7 8.3M8.7 1.4L1.9 8.3" stroke="#d0262c" stroke-width="1.9" stroke-linecap="round"/></svg>
</body></html>
